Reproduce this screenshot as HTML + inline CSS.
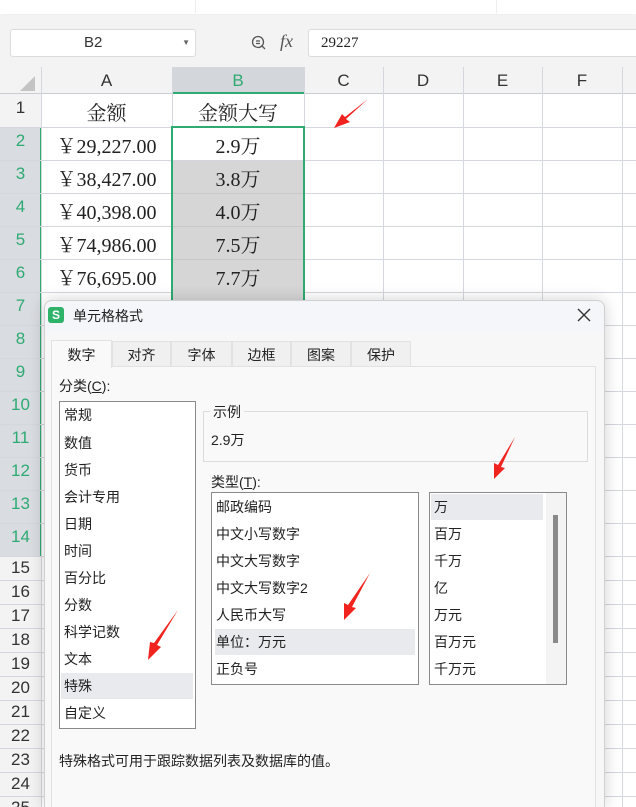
<!DOCTYPE html>
<html style="width:636px;height:807px;overflow:hidden"><head><meta charset="utf-8"><style>
*{margin:0;padding:0;box-sizing:border-box}
body{width:636px;height:807px;overflow:hidden;position:relative;background:#fff;font-family:"Liberation Sans","Noto Sans CJK SC",sans-serif;color:#222}
.a{position:absolute}
.vl{position:absolute;width:1px;background:#d4d7dd}
.hl{position:absolute;height:1px;background:#d4d7dd}
.rn{position:absolute;left:0;width:41px;text-align:center;font-size:17px;color:#333}
.cell{position:absolute;text-align:center;font-family:"Liberation Serif","Noto Serif CJK SC",serif;font-size:20px;color:#222}
.ch{position:absolute;top:67px;height:27px;line-height:27px;text-align:center;font-size:17px;color:#333}
.d{font-size:14px;color:#222}
.li{position:absolute;font-size:14px;color:#222;height:26px;line-height:26px;padding-left:5px}
.tab{position:absolute;top:341px;height:26px;background:#f0f0f0;border:1px solid #e2e2e2;text-align:center;line-height:26px;font-size:14px}
</style></head><body>
<div class="a" style="left:0;top:0;width:636px;height:14px;background:#fff;box-shadow:0 2px 3px rgba(0,0,0,.08)"></div>
<div class="a" style="left:195px;top:0;width:1px;height:13px;background:#eee"></div>
<div class="a" style="left:496px;top:0;width:1px;height:13px;background:#eee"></div>
<div class="a" style="left:0;top:15px;width:636px;height:52px;background:#f3f3f4"></div>
<div class="a" style="left:10px;top:29px;width:186px;height:28px;background:#fff;border:1px solid #dcdcdc;border-radius:3px;font-size:15px;line-height:26px;padding-left:73px;color:#333">B2<span style="position:absolute;right:5px;top:0;font-size:8px;color:#666">▼</span></div>
<svg class="a" style="left:250px;top:34px" width="18" height="18" viewBox="0 0 18 18"><circle cx="8" cy="8" r="5.5" fill="none" stroke="#555" stroke-width="1.3"/><path d="M6 7h4M6 9.5h4M12 12l3 3" stroke="#555" stroke-width="1.3" fill="none"/></svg>
<div class="a" style="left:280px;top:31px;font-family:'Liberation Serif',serif;font-style:italic;font-size:18px;color:#555">fx</div>
<div class="a" style="left:308px;top:29px;width:328px;height:28px;background:#fff;border:1px solid #dcdcdc;border-right:none;border-radius:3px 0 0 3px;font-size:15px;line-height:26px;padding-left:12px;font-family:'Liberation Serif',serif;color:#222">29227</div>
<div class="a" style="left:0;top:67px;width:636px;height:27px;background:#f3f3f4;border-bottom:1px solid #c9ccd2"></div>
<div class="a" style="left:172px;top:67px;width:132px;height:27px;background:#d3d6db;border-bottom:2px solid #2faa72"></div>
<svg class="a" style="left:18px;top:76px" width="18" height="16"><polygon points="17,0 17,15 2,15" fill="#c4c4c4"/></svg>
<div class="ch" style="left:41px;width:131px">A</div>
<div class="ch" style="left:172px;width:132px;color:#2faa72">B</div>
<div class="ch" style="left:304px;width:79px">C</div>
<div class="ch" style="left:383px;width:80px">D</div>
<div class="ch" style="left:463px;width:79px">E</div>
<div class="ch" style="left:542px;width:80px">F</div>
<div class="a" style="left:0;top:94px;width:41px;height:713px;background:#f3f3f4"></div>
<div class="a" style="left:0;top:127px;width:41px;height:429px;background:#d9dce1"></div>
<div class="a" style="left:40px;top:127px;width:2px;height:429px;background:#2faa72"></div>
<div class="vl" style="left:41px;top:67px;height:740px"></div>
<div class="vl" style="left:172px;top:67px;height:740px"></div>
<div class="vl" style="left:304px;top:67px;height:740px"></div>
<div class="vl" style="left:383px;top:67px;height:740px"></div>
<div class="vl" style="left:463px;top:67px;height:740px"></div>
<div class="vl" style="left:542px;top:67px;height:740px"></div>
<div class="vl" style="left:622px;top:67px;height:740px"></div>
<div class="hl" style="left:0;top:127px;width:636px"></div>
<div class="hl" style="left:0;top:160px;width:636px"></div>
<div class="hl" style="left:0;top:193px;width:636px"></div>
<div class="hl" style="left:0;top:226px;width:636px"></div>
<div class="hl" style="left:0;top:259px;width:636px"></div>
<div class="hl" style="left:0;top:292px;width:636px"></div>
<div class="hl" style="left:0;top:325px;width:636px"></div>
<div class="hl" style="left:0;top:358px;width:636px"></div>
<div class="hl" style="left:0;top:391px;width:636px"></div>
<div class="hl" style="left:0;top:424px;width:636px"></div>
<div class="hl" style="left:0;top:457px;width:636px"></div>
<div class="hl" style="left:0;top:490px;width:636px"></div>
<div class="hl" style="left:0;top:523px;width:636px"></div>
<div class="hl" style="left:0;top:556px;width:636px"></div>
<div class="hl" style="left:0;top:580px;width:636px"></div>
<div class="hl" style="left:0;top:604px;width:636px"></div>
<div class="hl" style="left:0;top:628px;width:636px"></div>
<div class="hl" style="left:0;top:652px;width:636px"></div>
<div class="hl" style="left:0;top:676px;width:636px"></div>
<div class="hl" style="left:0;top:700px;width:636px"></div>
<div class="hl" style="left:0;top:724px;width:636px"></div>
<div class="hl" style="left:0;top:748px;width:636px"></div>
<div class="hl" style="left:0;top:772px;width:636px"></div>
<div class="hl" style="left:0;top:796px;width:636px"></div>
<div class="a" style="left:173px;top:161px;width:131px;height:395px;background:#d6d6d6"></div>
<div class="hl" style="left:173px;top:193px;width:131px;background:#c8c8c8"></div>
<div class="hl" style="left:173px;top:226px;width:131px;background:#c8c8c8"></div>
<div class="hl" style="left:173px;top:259px;width:131px;background:#c8c8c8"></div>
<div class="a" style="left:171px;top:126px;width:134px;height:430px;border:2px solid #2faa72"></div>
<div class="rn" style="top:98px">1</div>
<div class="rn" style="top:131px;color:#2faa72">2</div>
<div class="rn" style="top:164px;color:#2faa72">3</div>
<div class="rn" style="top:197px;color:#2faa72">4</div>
<div class="rn" style="top:230px;color:#2faa72">5</div>
<div class="rn" style="top:263px;color:#2faa72">6</div>
<div class="rn" style="top:296px;color:#2faa72">7</div>
<div class="rn" style="top:329px;color:#2faa72">8</div>
<div class="rn" style="top:362px;color:#2faa72">9</div>
<div class="rn" style="top:395px;color:#2faa72">10</div>
<div class="rn" style="top:428px;color:#2faa72">11</div>
<div class="rn" style="top:461px;color:#2faa72">12</div>
<div class="rn" style="top:494px;color:#2faa72">13</div>
<div class="rn" style="top:527px;color:#2faa72">14</div>
<div class="rn" style="top:558px">15</div>
<div class="rn" style="top:582px">16</div>
<div class="rn" style="top:606px">17</div>
<div class="rn" style="top:630px">18</div>
<div class="rn" style="top:654px">19</div>
<div class="rn" style="top:678px">20</div>
<div class="rn" style="top:702px">21</div>
<div class="rn" style="top:726px">22</div>
<div class="rn" style="top:750px">23</div>
<div class="rn" style="top:774px">24</div>
<div class="rn" style="top:798px">25</div>
<div class="cell" style="left:41px;width:131px;top:97px">金额</div>
<div class="cell" style="left:172px;width:132px;top:97px">金额大写</div>
<div class="cell" style="left:41px;width:131px;top:130px">￥29,227.00</div>
<div class="cell" style="left:41px;width:131px;top:163px">￥38,427.00</div>
<div class="cell" style="left:41px;width:131px;top:196px">￥40,398.00</div>
<div class="cell" style="left:41px;width:131px;top:229px">￥74,986.00</div>
<div class="cell" style="left:41px;width:131px;top:262px">￥76,695.00</div>
<div class="cell" style="left:172px;width:132px;top:130px">2.9万</div>
<div class="cell" style="left:172px;width:132px;top:163px">3.8万</div>
<div class="cell" style="left:172px;width:132px;top:196px">4.0万</div>
<div class="cell" style="left:172px;width:132px;top:229px">7.5万</div>
<div class="cell" style="left:172px;width:132px;top:262px">7.7万</div>
<div class="a" style="left:44px;top:300px;width:561px;height:507px;background:#f7f7f7;border:1px solid #d0d0d0;border-bottom:none;border-radius:8px 8px 0 0;box-shadow:0 0 16px rgba(0,0,0,.18)"></div>
<div class="a" style="left:45px;top:301px;width:559px;height:31px;background:#f4f6f9;border-radius:8px 8px 0 0"></div>
<div class="a" style="left:48px;top:307px;width:16px;height:16px;background:#2fb36b;border-radius:3px;color:#fff;font-size:12px;font-weight:bold;text-align:center;line-height:16px">S</div>
<div class="a d" style="left:73px;top:306px">单元格格式</div>
<svg class="a" style="left:577px;top:308px" width="14" height="14"><path d="M1 1L13 13M13 1L1 13" stroke="#333" stroke-width="1.4"/></svg>
<div class="a" style="left:51px;top:366px;width:545px;height:441px;background:#f9f9f9;border:1px solid #e2e2e2;border-bottom:none"></div>
<div class="a d" style="left:51px;top:340px;width:61px;height:28px;background:#f9f9f9;border:1px solid #e2e2e2;border-bottom:none;text-align:center;line-height:28px">数字</div>
<div class="tab" style="left:112px;width:59px">对齐</div>
<div class="tab" style="left:171px;width:61px">字体</div>
<div class="tab" style="left:232px;width:59px">边框</div>
<div class="tab" style="left:291px;width:60px">图案</div>
<div class="tab" style="left:351px;width:60px">保护</div>
<div class="a d" style="left:59px;top:376px">分类(<u>C</u>):</div>
<div class="a" style="left:59px;top:401px;width:137px;height:328px;background:#fff;border:1px solid #8a8a8a"></div>
<div class="a" style="left:61px;top:673px;width:132px;height:26px;background:#e8eaed"></div>
<div class="li" style="left:59px;top:402px">常规</div>
<div class="li" style="left:59px;top:430px">数值</div>
<div class="li" style="left:59px;top:457px">货币</div>
<div class="li" style="left:59px;top:484px">会计专用</div>
<div class="li" style="left:59px;top:511px">日期</div>
<div class="li" style="left:59px;top:538px">时间</div>
<div class="li" style="left:59px;top:565px">百分比</div>
<div class="li" style="left:59px;top:592px">分数</div>
<div class="li" style="left:59px;top:619px">科学记数</div>
<div class="li" style="left:59px;top:646px">文本</div>
<div class="li" style="left:59px;top:673px">特殊</div>
<div class="li" style="left:59px;top:700px">自定义</div>
<div class="a" style="left:203px;top:411px;width:385px;height:51px;border:1px solid #dcdcdc"></div>
<div class="a d" style="left:210px;top:402px;background:#f9f9f9;padding:0 3px">示例</div>
<div class="a d" style="left:211px;top:430px">2.9万</div>
<div class="a d" style="left:211px;top:472px">类型(<u>T</u>):</div>
<div class="a" style="left:211px;top:492px;width:208px;height:193px;background:#fff;border:1px solid #8a8a8a"></div>
<div class="a" style="left:215px;top:629px;width:200px;height:26px;background:#e8eaed"></div>
<div class="li" style="left:211px;top:494px">邮政编码</div>
<div class="li" style="left:211px;top:521px">中文小写数字</div>
<div class="li" style="left:211px;top:548px">中文大写数字</div>
<div class="li" style="left:211px;top:575px">中文大写数字2</div>
<div class="li" style="left:211px;top:602px">人民币大写</div>
<div class="li" style="left:211px;top:629px">单位：万元</div>
<div class="li" style="left:211px;top:656px">正负号</div>
<div class="a" style="left:429px;top:492px;width:138px;height:193px;background:#fff;border:1px solid #8a8a8a"></div>
<div class="a" style="left:431px;top:494px;width:112px;height:26px;background:#e8eaed"></div>
<div class="a" style="left:546px;top:493px;width:20px;height:191px;background:#f4f4f4"></div>
<div class="a" style="left:553px;top:515px;width:5px;height:128px;background:#8a8a8a"></div>
<div class="li" style="left:429px;top:494px">万</div>
<div class="li" style="left:429px;top:521px">百万</div>
<div class="li" style="left:429px;top:548px">千万</div>
<div class="li" style="left:429px;top:575px">亿</div>
<div class="li" style="left:429px;top:602px">万元</div>
<div class="li" style="left:429px;top:629px">百万元</div>
<div class="li" style="left:429px;top:656px">千万元</div>
<div class="a d" style="left:59px;top:751px">特殊格式可用于跟踪数据列表及数据库的值。</div>
<svg class="a" style="left:0;top:0" width="636" height="807">
<g fill="#f0231e">
<polygon points="368,99 346,119 350,122 334,128 342,114 345,117"/>
<polygon points="515,437 501,467 505,468 494,479 494,463 498,465"/>
<polygon points="370,573 352,607 356,608 344,620 344,603 348,605"/>
<polygon points="178,610 157,645 161,647 148,660 150,642 154,643"/>
</g></svg>
</body></html>
